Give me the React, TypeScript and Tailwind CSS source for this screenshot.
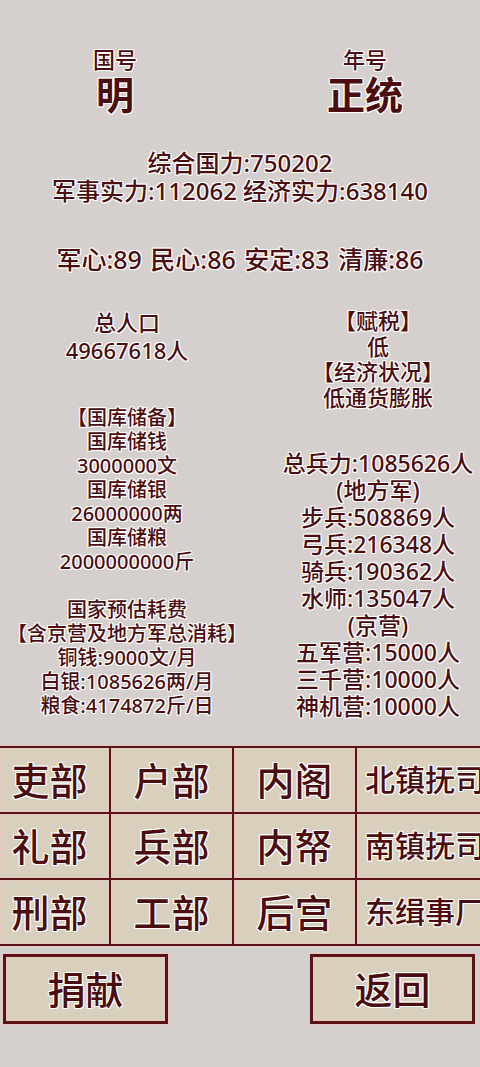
import React from "react";

const cellBase =
  "bg-[#d8cfbd] shadow-[inset_0_0_0_1px_#e6c9c0] flex items-center justify-center overflow-hidden whitespace-nowrap";

function Cell({ text, small, first }: { text: string; small?: boolean; first?: boolean }) {
  if (small) {
    return (
      <div className={cellBase + " justify-start pl-[8px] text-[30px] leading-[36px]"}>
        <span>{text}</span>
      </div>
    );
  }
  return (
    <div className={cellBase + (first ? " pr-[10px] text-[38px] leading-[44px]" : " text-[38px] leading-[44px]")}>
      <span>{text}</span>
    </div>
  );
}

function Btn({ text }: { text: string }) {
  return (
    <div className="w-[165px] h-[70px] bg-[#d8cfbd] border-[3px] border-[#5a1214] shadow-[0_0_0_1px_#e6c9c0,inset_0_0_0_1px_#e6c9c0] flex items-center justify-center text-[38px] leading-[44px]">
      {text}
    </div>
  );
}

export default function App() {
  const left1 = ["总人口", "49667618人"];
  const left2 = ["【国库储备】", "国库储钱", "3000000文", "国库储银", "26000000两", "国库储粮", "2000000000斤"];
  const left3 = ["国家预估耗费", "【含京营及地方军总消耗】", "铜钱:9000文/月", "白银:1085626两/月", "粮食:4174872斤/日"];
  const right1 = ["【赋税】", "低", "【经济状况】", "低通货膨胀"];
  const right2 = [
    "总兵力:1085626人",
    "(地方军)",
    "步兵:508869人",
    "弓兵:216348人",
    "骑兵:190362人",
    "水师:135047人",
    "(京营)",
    "五军营:15000人",
    "三千营:10000人",
    "神机营:10000人",
  ];
  return (
    <div className="w-[480px] min-h-[1067px] bg-[#d5d0cd] overflow-hidden font-['Noto_Sans','Noto_Sans_CJK_SC',sans-serif] font-medium text-[#4b0d10] [text-shadow:-1px_-1px_0_#fff,1px_-1px_0_#fff,-1px_1px_0_#fff,1px_1px_0_#fff,0_1px_0_#fff,0_-1px_0_#fff,1px_0_0_#fff,-1px_0_0_#fff]">
      {/* header */}
      <div className="flex pt-[46px]">
        <div className="w-[230px] flex flex-col items-center">
          <div className="text-[22px] leading-[26px]">国号</div>
          <div className="text-[38px] leading-[44px] font-bold">明</div>
        </div>
        <div className="w-[230px] ml-[20px] flex flex-col items-center">
          <div className="text-[22px] leading-[26px]">年号</div>
          <div className="text-[38px] leading-[44px] font-bold">正统</div>
        </div>
      </div>

      {/* stats */}
      <div className="mt-[33px] flex flex-col items-center text-[24px] leading-[28px] whitespace-nowrap">
        <div>综合国力:750202</div>
        <div>军事实力:112062 经济实力:638140</div>
      </div>
      <div className="mt-[40px] flex justify-center text-[25px] leading-[28px] whitespace-nowrap [word-spacing:2px]">
        军心:89 民心:86 安定:83 清廉:86
      </div>

      {/* columns */}
      <div className="mt-[35px] h-[438px] flex">
        <div className="w-[254px] flex flex-col items-center whitespace-nowrap">
          <div className="flex flex-col items-center text-[22px] leading-[28px]">
            {left1.map((t) => (
              <div key={t}>{t}</div>
            ))}
          </div>
          <div className="mt-[42px] flex flex-col items-center text-[20px] leading-[24px]">
            {left2.map((t) => (
              <div key={t}>{t}</div>
            ))}
          </div>
          <div className="mt-[24px] flex flex-col items-center text-[20px] leading-[24px]">
            {left3.map((t) => (
              <div key={t}>{t}</div>
            ))}
          </div>
        </div>
        <div className="w-[226px] pl-[22px] flex flex-col items-center whitespace-nowrap">
          <div className="flex flex-col items-center text-[22px] leading-[25.5px]">
            {right1.map((t) => (
              <div key={t}>{t}</div>
            ))}
          </div>
          <div className="mt-[40px] flex flex-col items-center text-[23px] leading-[27px]">
            {right2.map((t) => (
              <div key={t}>{t}</div>
            ))}
          </div>
        </div>
      </div>

      {/* grid */}
      <div className="bg-[#5a1214] py-[2px] shadow-[0_0_0_1px_#e6c9c0] grid grid-cols-[109px_121px_121px_123px] grid-rows-[64px_64px_64px] gap-[2px]">
        <Cell text="吏部" first />
        <Cell text="户部" />
        <Cell text="内阁" />
        <Cell text="北镇抚司" small />
        <Cell text="礼部" first />
        <Cell text="兵部" />
        <Cell text="内帑" />
        <Cell text="南镇抚司" small />
        <Cell text="刑部" first />
        <Cell text="工部" />
        <Cell text="后宫" />
        <Cell text="东缉事厂" small />
      </div>

      {/* buttons */}
      <div className="mt-[8px] flex justify-between pl-[3px] pr-[5px]">
        <Btn text="捐献" />
        <Btn text="返回" />
      </div>
    </div>
  );
}
